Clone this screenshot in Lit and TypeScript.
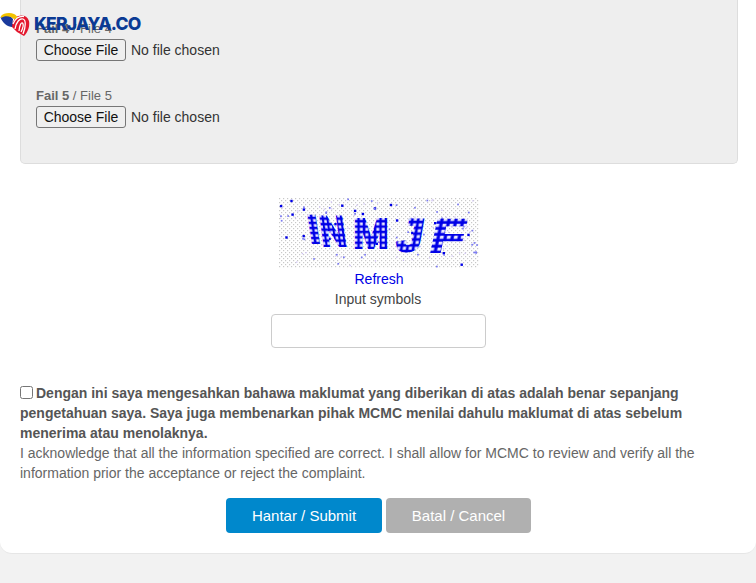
import { LitElement, html, css, svg } from "lit";
import { customElement } from "lit/decorators.js";

function noise() {
  let s = 12345;
  const r = () => ((s = (s * 1103515245 + 12345) & 0x7fffffff) / 0x7fffffff);
  const out = [];
  for (let i = 0; i < 150; i++) {
    const x = r() * 198, y = r() * 68, big = r();
    const size = big > 0.8 ? 2.4 : big > 0.45 ? 1.7 : 1.3;
    const fill = big > 0.8 ? "#0000e6" : big > 0.45 ? "#7a7af2" : "#cfc2f5";
    out.push(svg`<rect x=${x.toFixed(1)} y=${y.toFixed(1)} width=${size} height=${size} fill=${fill}></rect>`);
  }
  return out;
}

const LETTERS = [
  { ch: "I", x: 31, y: 45, skew: 9, sx: 0.95, sy: 0.9 },
  { ch: "N", x: 43, y: 48, skew: 8, sx: 0.82, sy: 0.98 },
  { ch: "M", x: 74, y: 50, skew: 0, sx: 0.98, sy: 0.96 },
  { ch: "J", x: 116, y: 53, skew: -10, sx: 1.05, sy: 1.04 },
  { ch: "F", x: 149, y: 54, skew: -12, sx: 1.25, sy: 1.06 },
];

@customElement("app-root")
export class AppRoot extends LitElement {
  static styles = css`
    :host {
      display: block;
      position: relative;
      background: #f2f2f2;
      min-height: 583px;
      font-family: "Liberation Sans", Arial, sans-serif;
      font-size: 14px;
      line-height: 20px;
      color: #666;
    }
    .card {
      background: #fff;
      height: 554px;
      box-sizing: border-box;
      border-bottom: 1px solid #e6e6e6;
      border-radius: 0 0 12px 12px;
      padding: 0 18px 0 20px;
    }
    .panel {
      background: #eee;
      border: 1px solid #ddd;
      border-top: 0;
      border-radius: 0 0 5px 5px;
      height: 164px;
      box-sizing: border-box;
      padding: 19px 15px 0;
    }
    .field { height: 67px; }
    .field label { display: block; height: 20px; font-size: 13px; color: #666; }
    .field input {
      display: block;
      font: 14px "Liberation Sans", Arial, sans-serif;
      color: #333;
      margin: 0;
      height: 22px;
    }
    .field input::file-selector-button {
      width: 90px;
      height: 22px;
      margin-right: 5px;
      padding: 0;
      border: 1px solid #767676;
      border-radius: 3px;
      background: #efefef;
      color: #111;
      font: 14px "Liberation Sans", Arial, sans-serif;
    }
    .captcha {
      display: flex;
      flex-direction: column;
      align-items: center;
      padding-top: 34px;
      color: #444;
    }
    .captcha svg { display: block; width: 200px; height: 70px; }
    .refresh { color: #0000e6; text-decoration: none; height: 20px; margin-top: 1px; }
    .hint { height: 20px; margin-right: 2px; }
    .code {
      width: 215px;
      height: 34px;
      box-sizing: border-box;
      margin: 5px 2px 0 0;
      border: 1px solid #ccc;
      border-radius: 4px;
      background: #fff;
    }
    .ack { margin: 35px 0 0; }
    .ack input { width: 13px; height: 13px; margin: 0 3px 0 0; vertical-align: -1px; }
    .ack strong { color: #555; }
    .actions {
      display: flex;
      justify-content: center;
      gap: 4px;
      margin-top: 15px;
      padding-right: 1px;
    }
    .btn {
      height: 35px;
      border: 0;
      border-radius: 4px;
      color: #fff;
      font: 15px "Liberation Sans", Arial, sans-serif;
      padding: 0;
    }
    .submit { background: #0088cc; width: 156px; }
    .cancel { background: #b0b0b0; width: 145px; }
    .logo {
      position: absolute;
      left: 0;
      top: 11px;
      display: flex;
      align-items: center;
      gap: 4px;
      color: #0b3a94;
      font: 800 17.5px/26px Inter, "Liberation Sans", sans-serif;
      letter-spacing: -0.8px;
    }
    .logo svg { display: block; width: 30px; height: 26px; }
  `;

  render() {
    return html`
      <div class="card">
        <div class="panel">
          <div class="field">
            <label><b>Fail 4</b> / File 4</label>
            <input type="file" />
          </div>
          <div class="field">
            <label><b>Fail 5</b> / File 5</label>
            <input type="file" />
          </div>
        </div>

        <div class="captcha">
          <svg viewBox="0 0 200 70" role="img" aria-label="captcha">
            <defs>
              <pattern id="dots" width="4" height="4" patternUnits="userSpaceOnUse">
                <rect width="1.2" height="1.2" fill="#c8c8c8"></rect>
                <rect x="2" y="2" width="1.2" height="1.2" fill="#c8c8c8"></rect>
              </pattern>
              <pattern id="scales" width="5.6" height="5.6" patternUnits="userSpaceOnUse">
                <rect width="5.6" height="5.6" fill="#0000e6"></rect>
                <rect x="1.4" y="1.4" width="3" height="3" fill="#e8e8ff"></rect>
              </pattern>
            </defs>
            <rect width="200" height="70" fill="url(#dots)"></rect>
            ${noise()}
            ${LETTERS.map(
              (l) => svg`<text
                transform="translate(${l.x} ${l.y}) skewX(${l.skew}) scale(${l.sx} ${l.sy})"
                fill="url(#scales)" stroke="url(#scales)" stroke-width="2"
                style="font: 700 44px 'Liberation Sans', sans-serif;">${l.ch}</text>`
            )}
          </svg>
          <a class="refresh" href="#">Refresh</a>
          <div class="hint">Input symbols</div>
          <input class="code" type="text" />
        </div>

        <div class="ack">
          <input type="checkbox" /><strong>Dengan ini saya mengesahkan bahawa maklumat yang diberikan di atas adalah benar sepanjang pengetahuan saya. Saya juga membenarkan pihak MCMC menilai dahulu maklumat di atas sebelum menerima atau menolaknya.</strong><br />
          I acknowledge that all the information specified are correct. I shall allow for MCMC to review and verify all the information prior the acceptance or reject the complaint.
        </div>

        <div class="actions">
          <button class="btn submit">Hantar / Submit</button>
          <button class="btn cancel">Batal / Cancel</button>
        </div>
      </div>

      <div class="logo">
        <svg viewBox="0 0 30 26">
          <path d="M11 15 L15 7 C20 3 27 4 29 10 C30 15 28 21 24 25 L17 21 Z" fill="#e3172d"></path>
          <path d="M0.5 6 C3 4 9 3 13 8 L12 16 C8 16 2 12 0.5 6 Z" fill="#1a3a9c"></path>
          <path d="M1 5 C3 2 10 1 14 3 C16 4 17 5 18 7 L14 8 C11 5 5 4 1 7 Z" fill="#f2c200"></path>
          <path d="M15 18 C16 11 20 7 23 8 C26 9 26 15 23 23 M19 20 C19.5 15 21 11 22.5 12 C23.5 13 23 17 21 21 M13 13 C15 8 19 5 24 5.5"
            fill="none" stroke="#fff" stroke-width="1.3"></path>
        </svg>
        <span>KERJAYA.CO</span>
      </div>
    `;
  }
}
